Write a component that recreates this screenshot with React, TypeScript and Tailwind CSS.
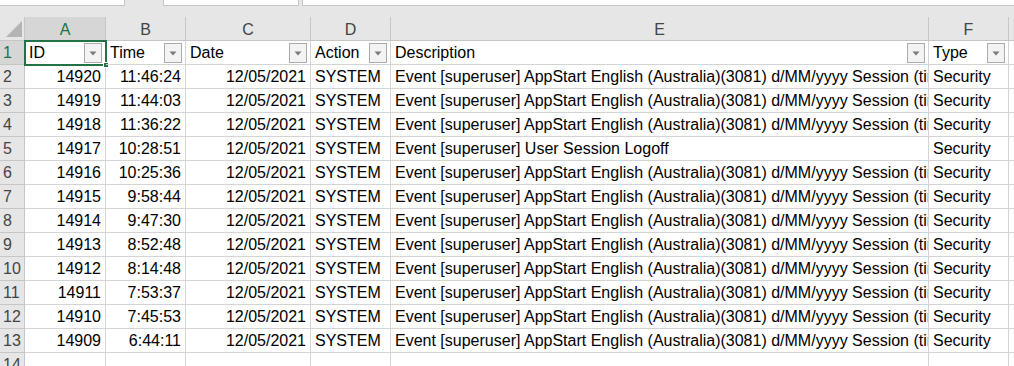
import React from "react";

const cols = ["A", "B", "C", "D", "E", "F", ""];

const rows: [number, string, string][] = [
  [14920, "11:46:24", "start"],
  [14919, "11:44:03", "start"],
  [14918, "11:36:22", "start"],
  [14917, "10:28:51", "logoff"],
  [14916, "10:25:36", "start"],
  [14915, "9:58:44", "start"],
  [14914, "9:47:30", "start"],
  [14913, "8:52:48", "start"],
  [14912, "8:14:48", "start"],
  [14911, "7:53:37", "start"],
  [14910, "7:45:53", "start"],
  [14909, "6:44:11", "start"],
];

const START =
  "Event [superuser] AppStart English (Australia)(3081) d/MM/yyyy Session (timeout 20 mins)";
const LOGOFF = "Event [superuser] User Session Logoff";

function FilterButton() {
  return (
    <span className="absolute right-[3px] top-[2px] flex h-[20px] w-[18px] items-center justify-center border border-[#ababab] bg-[#f3f3f3]">
      <svg width="8" height="5" viewBox="0 0 8 5">
        <path d="M0.5 0.5h7L4 4.5z" fill="#7a7a7a" />
      </svg>
    </span>
  );
}

function HeadCell({ label, filter }: { label: string; filter?: boolean }) {
  return (
    <div className="relative flex items-end overflow-hidden whitespace-nowrap border-b border-r border-[#d4d4d4] px-[4px] pb-[1px]">
      {label}
      {filter && <FilterButton />}
    </div>
  );
}

function Cell({
  children,
  right,
}: {
  children: React.ReactNode;
  right?: boolean;
}) {
  return (
    <div
      className={`flex items-end overflow-hidden whitespace-nowrap border-b border-r border-[#d4d4d4] px-[4px] pb-[1px] ${
        right ? "justify-end" : ""
      }`}
    >
      {children}
    </div>
  );
}

function RowHead({ n, selected }: { n: number; selected?: boolean }) {
  return (
    <div
      className={`flex items-end border-b border-r border-[#c6c6c6] pb-[1px] pl-[3px] ${
        selected ? "bg-[#d6d6d6] text-[#217346]" : "bg-[#e6e6e6] text-[#444]"
      }`}
    >
      {n}
    </div>
  );
}

export default function App() {
  return (
    <div className="h-[366px] w-[1014px] overflow-hidden bg-white font-['Liberation_Sans',Arial,sans-serif] text-[16px] leading-[20px] text-black">
      <div className="flex h-[17px] items-start bg-[#e6e6e6]">
        <div className="h-[6px] w-[125px] border-b border-r border-[#c6c6c6] bg-white" />
        <div className="ml-[38px] h-[6px] w-[136px] border-x border-b border-[#c6c6c6] bg-white" />
        <div className="ml-[3px] h-[6px] flex-1 border-b border-l border-[#c6c6c6] bg-white" />
      </div>

      <div className="grid grid-cols-[25px_81px_80px_125px_80px_538px_80px_1fr] auto-rows-[24px]">
        <div className="relative border-b border-r border-[#c6c6c6] bg-[#e6e6e6]">
          <svg className="absolute bottom-[3px] right-[2px]" width="16" height="16" viewBox="0 0 16 16">
            <path d="M16 0V16H0z" fill="#b4b4b4" />
          </svg>
        </div>
        {cols.map((c, i) => (
          <div
            key={i}
            className={`flex items-center justify-center border-b border-r border-[#c6c6c6] pt-[2px] ${
              c === "A" ? "bg-[#d6d6d6] text-[#217346]" : "bg-[#e6e6e6] text-[#444]"
            }`}
          >
            {c}
          </div>
        ))}

        <RowHead n={1} selected />
        <div className="relative flex items-end border-b border-r border-[#d4d4d4] px-[4px] pb-[1px]">
          ID
          <FilterButton />
          <span className="pointer-events-none absolute -left-[1px] -top-[1px] bottom-[-2px] right-[-2px] border-2 border-[#217346]" />
          <span className="absolute bottom-[-4px] right-[-4px] h-[6px] w-[6px] border border-white bg-[#217346]" />
        </div>
        <HeadCell label="Time" filter />
        <HeadCell label="Date" filter />
        <HeadCell label="Action" filter />
        <HeadCell label="Description" filter />
        <HeadCell label="Type" filter />
        <Cell>{""}</Cell>

        {rows.map(([id, time, kind], i) => (
          <React.Fragment key={id}>
            <RowHead n={i + 2} />
            <Cell right>{id}</Cell>
            <Cell right>{time}</Cell>
            <Cell right>12/05/2021</Cell>
            <Cell>SYSTEM</Cell>
            <Cell>{kind === "logoff" ? LOGOFF : START}</Cell>
            <Cell>Security</Cell>
            <Cell>{""}</Cell>
          </React.Fragment>
        ))}

        <RowHead n={14} />
        {cols.map((_, i) => (
          <Cell key={i}>{""}</Cell>
        ))}
      </div>
    </div>
  );
}
